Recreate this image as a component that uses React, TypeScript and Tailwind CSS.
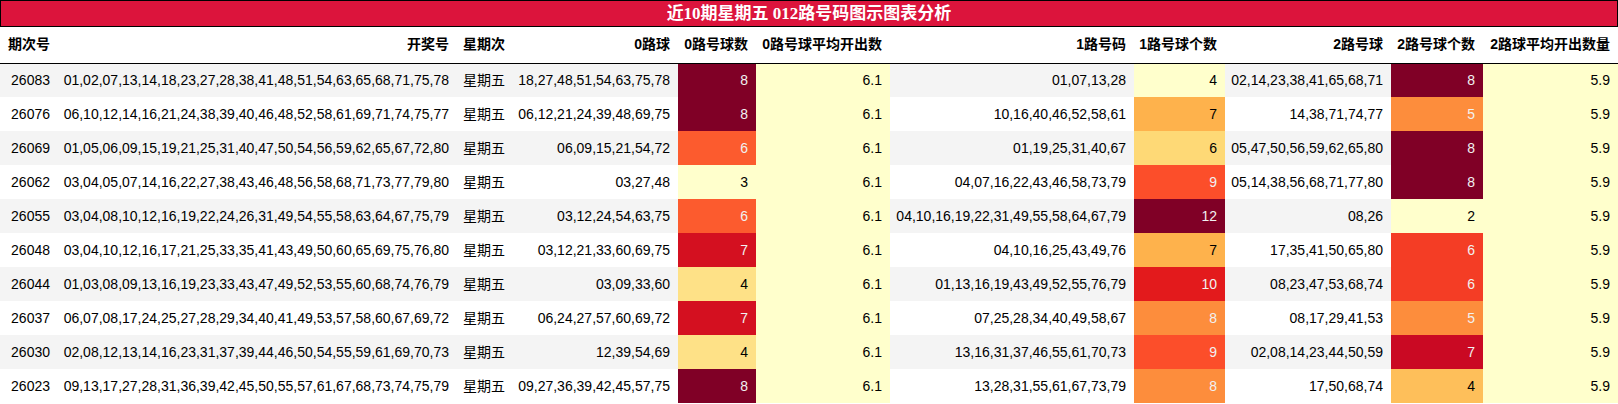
import React from "react";

type Row = {
  id: string;
  nums: string;
  day: string;
  r0: string;
  c0: string;
  c0cls: string;
  r1: string;
  c1: string;
  c1cls: string;
  r2: string;
  c2: string;
  c2cls: string;
};

const D8 = "bg-[#800026] text-[#f1f1f1]";
const Y0 = "bg-[#ffffcc] text-black";

const rows: Row[] = [
  { id: "26083", nums: "01,02,07,13,14,18,23,27,28,38,41,48,51,54,63,65,68,71,75,78", day: "星期五", r0: "18,27,48,51,54,63,75,78", c0: "8", c0cls: D8, r1: "01,07,13,28", c1: "4", c1cls: Y0, r2: "02,14,23,38,41,65,68,71", c2: "8", c2cls: D8 },
  { id: "26076", nums: "06,10,12,14,16,21,24,38,39,40,46,48,52,58,61,69,71,74,75,77", day: "星期五", r0: "06,12,21,24,39,48,69,75", c0: "8", c0cls: D8, r1: "10,16,40,46,52,58,61", c1: "7", c1cls: "bg-[#feb24c] text-black", r2: "14,38,71,74,77", c2: "5", c2cls: "bg-[#fd8d3c] text-[#f1f1f1]" },
  { id: "26069", nums: "01,05,06,09,15,19,21,25,31,40,47,50,54,56,59,62,65,67,72,80", day: "星期五", r0: "06,09,15,21,54,72", c0: "6", c0cls: "bg-[#fc5b2e] text-[#f1f1f1]", r1: "01,19,25,31,40,67", c1: "6", c1cls: "bg-[#fed976] text-black", r2: "05,47,50,56,59,62,65,80", c2: "8", c2cls: D8 },
  { id: "26062", nums: "03,04,05,07,14,16,22,27,38,43,46,48,56,58,68,71,73,77,79,80", day: "星期五", r0: "03,27,48", c0: "3", c0cls: Y0, r1: "04,07,16,22,43,46,58,73,79", c1: "9", c1cls: "bg-[#fc4e2a] text-[#f1f1f1]", r2: "05,14,38,56,68,71,77,80", c2: "8", c2cls: D8 },
  { id: "26055", nums: "03,04,08,10,12,16,19,22,24,26,31,49,54,55,58,63,64,67,75,79", day: "星期五", r0: "03,12,24,54,63,75", c0: "6", c0cls: "bg-[#fc5b2e] text-[#f1f1f1]", r1: "04,10,16,19,22,31,49,55,58,64,67,79", c1: "12", c1cls: D8, r2: "08,26", c2: "2", c2cls: Y0 },
  { id: "26048", nums: "03,04,10,12,16,17,21,25,33,35,41,43,49,50,60,65,69,75,76,80", day: "星期五", r0: "03,12,21,33,60,69,75", c0: "7", c0cls: "bg-[#d41020] text-[#f1f1f1]", r1: "04,10,16,25,43,49,76", c1: "7", c1cls: "bg-[#feb24c] text-black", r2: "17,35,41,50,65,80", c2: "6", c2cls: "bg-[#f43d25] text-[#f1f1f1]" },
  { id: "26044", nums: "01,03,08,09,13,16,19,23,33,43,47,49,52,53,55,60,68,74,76,79", day: "星期五", r0: "03,09,33,60", c0: "4", c0cls: "bg-[#fee187] text-black", r1: "01,13,16,19,43,49,52,55,76,79", c1: "10", c1cls: "bg-[#e31a1c] text-[#f1f1f1]", r2: "08,23,47,53,68,74", c2: "6", c2cls: "bg-[#f43d25] text-[#f1f1f1]" },
  { id: "26037", nums: "06,07,08,17,24,25,27,28,29,34,40,41,49,53,57,58,60,67,69,72", day: "星期五", r0: "06,24,27,57,60,69,72", c0: "7", c0cls: "bg-[#d41020] text-[#f1f1f1]", r1: "07,25,28,34,40,49,58,67", c1: "8", c1cls: "bg-[#fd8d3c] text-[#f1f1f1]", r2: "08,17,29,41,53", c2: "5", c2cls: "bg-[#fd8d3c] text-[#f1f1f1]" },
  { id: "26030", nums: "02,08,12,13,14,16,23,31,37,39,44,46,50,54,55,59,61,69,70,73", day: "星期五", r0: "12,39,54,69", c0: "4", c0cls: "bg-[#fee187] text-black", r1: "13,16,31,37,46,55,61,70,73", c1: "9", c1cls: "bg-[#fc4e2a] text-[#f1f1f1]", r2: "02,08,14,23,44,50,59", c2: "7", c2cls: "bg-[#ca0923] text-[#f1f1f1]" },
  { id: "26023", nums: "09,13,17,27,28,31,36,39,42,45,50,55,57,61,67,68,73,74,75,79", day: "星期五", r0: "09,27,36,39,42,45,57,75", c0: "8", c0cls: D8, r1: "13,28,31,55,61,67,73,79", c1: "8", c1cls: "bg-[#fd8d3c] text-[#f1f1f1]", r2: "17,50,68,74", c2: "4", c2cls: "bg-[#febf5a] text-black" },
];

const headers = [
  "期次号",
  "开奖号",
  "星期次",
  "0路球",
  "0路号球数",
  "0路号球平均开出数",
  "1路号码",
  "1路号球个数",
  "2路号球",
  "2路号球个数",
  "2路球平均开出数量",
];

const cell = "pr-2 pl-1 text-right whitespace-nowrap";

export default function App() {
  return (
    <div
      className="w-[1618px] h-[404px] overflow-hidden bg-white text-black text-[14px]"
      style={{ fontFamily: '"Liberation Sans", "Noto Sans CJK SC", sans-serif' }}
    >
      <div
        className="h-[27px] bg-[#dc143c] border border-black flex items-center justify-center text-white font-bold text-[17px] leading-none"
        style={{ fontFamily: '"Liberation Serif", "Noto Sans CJK SC", serif' }}
      >
        近10期星期五 012路号码图示图表分析
      </div>
      <table className="table-fixed w-[1618px] border-collapse">
        <colgroup>
          <col className="w-[58px]" />
          <col className="w-[399px]" />
          <col className="w-[56px]" />
          <col className="w-[165px]" />
          <col className="w-[78px]" />
          <col className="w-[134px]" />
          <col className="w-[244px]" />
          <col className="w-[91px]" />
          <col className="w-[166px]" />
          <col className="w-[92px]" />
          <col className="w-[135px]" />
        </colgroup>
        <thead>
          <tr className="h-[36px] border-b border-black">
            {headers.map((h) => (
              <th key={h} className={`${cell} font-bold`}>
                {h}
              </th>
            ))}
          </tr>
        </thead>
        <tbody>
          {rows.map((r, i) => (
            <tr key={r.id} className={`h-[34px] ${i % 2 === 0 ? "bg-[#f4f4f4]" : "bg-white"}`}>
              <td className={cell}>{r.id}</td>
              <td className={cell}>{r.nums}</td>
              <td className={cell}>{r.day}</td>
              <td className={cell}>{r.r0}</td>
              <td className={`${cell} ${r.c0cls}`}>{r.c0}</td>
              <td className={`${cell} bg-[#ffffcc]`}>6.1</td>
              <td className={cell}>{r.r1}</td>
              <td className={`${cell} ${r.c1cls}`}>{r.c1}</td>
              <td className={cell}>{r.r2}</td>
              <td className={`${cell} ${r.c2cls}`}>{r.c2}</td>
              <td className={`${cell} bg-[#ffffcc]`}>5.9</td>
            </tr>
          ))}
        </tbody>
      </table>
    </div>
  );
}
